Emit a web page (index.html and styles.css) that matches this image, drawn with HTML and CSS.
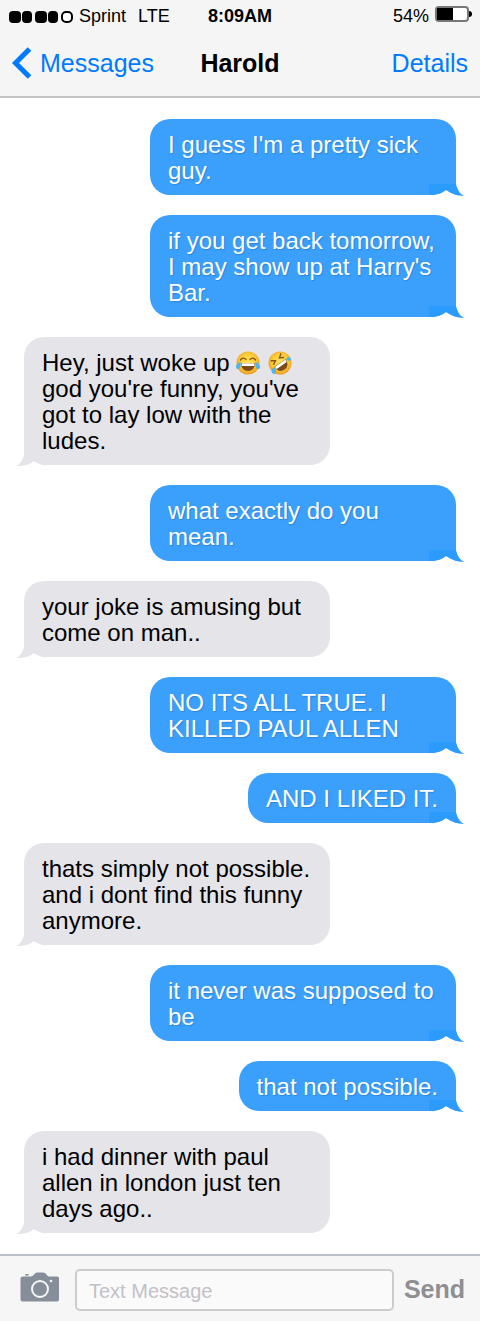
FILE: index.html
```html
<!DOCTYPE html>
<html lang="en">
<head>
<meta charset="utf-8">
<meta name="viewport" content="width=device-width, initial-scale=1">
<title>Harold</title>
<link rel="stylesheet" href="styles.css">
</head>
<body>
<svg class="defs" aria-hidden="true">
  <defs>
    <symbol id="tail-sent" viewBox="0 0 36 12">
      <path class="tail-gap" d="M0 12V11C8 11 13 9 17 6C22 9 28 12 35 12Z"/>
      <path d="M0 0H27C28 5 31 10 35 12C28 12 22 9 17 6C13 9 8 11 0 11Z"/>
    </symbol>
    <symbol id="tail-received" viewBox="0 0 30 12">
      <path class="tail-gap" d="M0 12C8 12 14 10 18 7C21 9 25 11 30 11V12Z"/>
      <path d="M8 0C7 6 4 10 0 12C8 12 14 10 18 7C21 9 25 11 30 11V0Z"/>
    </symbol>
    <radialGradient id="face" cx="50%" cy="45%" r="55%">
      <stop offset="0" stop-color="#ffe45c"/>
      <stop offset="0.65" stop-color="#fdcb35"/>
      <stop offset="1" stop-color="#eb9a22"/>
    </radialGradient>
  </defs>
</svg>

<header class="header">
  <div class="status">
    <div class="carrier">
      <svg class="signal" viewBox="0 0 64 12" aria-hidden="true">
        <rect width="12" height="12" rx="4"/><rect x="13" width="10" height="12" rx="4"/>
        <rect x="26" width="12" height="12" rx="4"/><rect x="39" width="10" height="12" rx="4"/>
        <rect class="signal-empty" x="53" y="1" width="10" height="10" rx="4"/>
      </svg>
      <span>Sprint</span>
      <span class="network">LTE</span>
    </div>
    <time class="time">8:09AM</time>
    <div class="power">
      <span>54%</span>
      <svg class="battery" viewBox="0 0 37 16" aria-hidden="true">
        <rect x="1" y="1" width="32" height="14" rx="3" fill="#fff" stroke="#777" stroke-width="2"/>
        <path d="M2 2H18V14H2Z"/>
        <path d="M34 5C36 5 37 6 37 8S36 11 34 11Z"/>
      </svg>
    </div>
  </div>
  <nav class="nav">
    <a class="link" href="#"><svg class="chevron" viewBox="0 0 20 32" aria-hidden="true"><path d="M17.500 2L3.500 16L17.500 30"/></svg>Messages</a>
    <h1 class="title">Harold</h1>
    <a class="link details" href="#">Details</a>
  </nav>
</header>

<main class="thread">
  <p class="bubble sent">I guess I'm a pretty sick guy.<svg class="tail" aria-hidden="true"><use href="#tail-sent"/></svg></p>
  <p class="bubble sent">if you get back tomorrow, I may show up at Harry's Bar.<svg class="tail" aria-hidden="true"><use href="#tail-sent"/></svg></p>
  <p class="bubble received">Hey, just woke up <svg class="emoji" viewBox="0 0 24 24" role="img" aria-label="Face with tears of joy">
      <circle cx="12" cy="12" r="11.500" fill="url(#face)"/>
      <path d="M4.500 9Q7 5.500 10 8.500M14 8.500Q17 5.500 19.500 9" fill="none" stroke="#8a5518" stroke-width="1.400" stroke-linecap="round"/>
      <path d="M5 12H19Q18.500 20 12 20Q5.500 20 5 12Z" fill="#7d4a1c"/>
      <path d="M5.500 12.300H18.500L18 15H6Z" fill="#fff"/>
      <path d="M4.500 11C1 12 -1 15 0.500 17.500C3 19.500 5.500 16 4.500 11ZM19.500 11C23 12 25 15 23.500 17.500C21 19.500 18.500 16 19.500 11Z" fill="#4ab5ef"/>
    </svg> <svg class="emoji" viewBox="0 0 24 24" role="img" aria-label="Rolling on the floor laughing">
      <circle cx="12" cy="12" r="11.500" fill="url(#face)"/>
      <g transform="rotate(-35 12 12)">
        <path d="M6 5L9.500 7.500L6 9.500M18 5L14.500 7.500L18 9.500" fill="none" stroke="#8a5518" stroke-width="1.400" stroke-linecap="round"/>
        <path d="M5 12H19Q18.500 20 12 20Q5.500 20 5 12Z" fill="#7d4a1c"/>
        <path d="M5.500 12.300H18.500L18 15H6Z" fill="#fff"/>
        <path d="M4.500 12C1 12 -1 15 0.500 17.500C3 19 5.500 16 4.500 12ZM19.500 12C22 11 24 13 23.500 15C22 17 19 15 19.500 12Z" fill="#4ab5ef"/>
      </g>
    </svg> god you're funny, you've got to lay low with the ludes.<svg class="tail" aria-hidden="true"><use href="#tail-received"/></svg></p>
  <p class="bubble sent">what exactly do you mean.<svg class="tail" aria-hidden="true"><use href="#tail-sent"/></svg></p>
  <p class="bubble received">your joke is amusing but come on man..<svg class="tail" aria-hidden="true"><use href="#tail-received"/></svg></p>
  <p class="bubble sent">NO ITS ALL TRUE. I KILLED PAUL ALLEN<svg class="tail" aria-hidden="true"><use href="#tail-sent"/></svg></p>
  <p class="bubble sent">AND I LIKED IT.<svg class="tail" aria-hidden="true"><use href="#tail-sent"/></svg></p>
  <p class="bubble received">thats simply not possible. and i dont find this funny anymore.<svg class="tail" aria-hidden="true"><use href="#tail-received"/></svg></p>
  <p class="bubble sent">it never was supposed to be<svg class="tail" aria-hidden="true"><use href="#tail-sent"/></svg></p>
  <p class="bubble sent">that not possible.<svg class="tail" aria-hidden="true"><use href="#tail-sent"/></svg></p>
  <p class="bubble received">i had dinner with paul allen in london just ten days ago..<svg class="tail" aria-hidden="true"><use href="#tail-received"/></svg></p>
</main>

<form class="composer">
  <button class="camera" type="button" aria-label="Add a photo">
    <svg viewBox="0 0 40 30" aria-hidden="true">
      <path d="M3 4.500H11Q13 4 14 2.500Q15.500 0.500 17 0.500H23Q25 0.500 26.500 2.500Q27.500 4.500 29 4.500H37Q39 4.500 39 6.500V27.500Q39 29.500 37 29.500H2.500Q0.500 29.500 0.500 27.500V6.500Q0.500 4.500 3 4.500Z" fill="#858e99"/>
      <path d="M5 3.500Q5 2 6 2H8Q9 2 9 3.500Z" fill="#858e99"/>
      <circle cx="20" cy="17" r="8" fill="none" stroke="#f6f6f6" stroke-width="2"/>
      <circle cx="31" cy="9" r="1.300" fill="#f6f6f6"/>
    </svg>
  </button>
  <input class="field" type="text" placeholder="Text Message" aria-label="Text Message">
  <button class="send" type="submit">Send</button>
</form>
</body>
</html>
```
FILE: styles.css
```css
* { box-sizing: border-box; }

body {
  margin: 0;
  background: #fff;
  color: #000;
  font-family: "Liberation Sans", Arial, sans-serif;
}

.defs { position: absolute; width: 0; height: 0; }

.header {
  background: #f5f5f5;
  border-bottom: 2px solid #c4c4c4;
  padding-bottom: 7px;
}

.status, .nav {
  display: grid;
  grid-template-columns: 1fr auto 1fr;
  align-items: center;
}

.status {
  height: 32px;
  padding: 0 8px;
  font-size: 18px;
  line-height: 20px;
}
.carrier, .power { display: flex; align-items: center; }
.carrier { padding-left: 1px; }
.power { justify-content: flex-end; gap: 6px; }
.signal { width: 64px; height: 12px; margin-top: 2px; margin-right: 6px; }
.signal-empty { fill: #fff; stroke: #000; stroke-width: 2; }
.network { margin-left: 12px; }
.time { font-weight: bold; }
.battery { width: 37px; height: 16px; margin-bottom: 4px; }

.nav {
  height: 52px;
  margin-top: 5px;
  padding: 0 12px;
}
.link {
  display: flex;
  align-items: center;
  gap: 8px;
  color: #007aff;
  font-size: 25px;
  line-height: 32px;
  text-decoration: none;
}
.details { justify-content: flex-end; }
.chevron { width: 20px; height: 32px; fill: none; stroke: #007aff; stroke-width: 5; }
.title { margin: 0; font-size: 25px; line-height: 32px; }

.thread {
  display: flex;
  flex-direction: column;
  gap: 20px;
  padding: 21px 24px;
}

.bubble {
  position: relative;
  max-width: calc(75% - 18px);
  margin: 0;
  padding: 13px 18px 11px;
  font-size: 24px;
  line-height: 26px;
}
.sent {
  align-self: flex-end;
  background: #3b9ffc;
  color: #fff;
  border-radius: 20px 20px 0 20px;
  text-shadow: 1px 1px 1px #2b86dc;
}
.received {
  align-self: flex-start;
  background: #e5e4e9;
  border-radius: 20px 20px 20px 0;
}

.tail { position: absolute; bottom: -1px; height: 12px; }
.sent .tail { right: -9px; width: 36px; fill: #2b9bfd; }
.received .tail { left: -8px; width: 30px; fill: #e5e4e9; }
.tail .tail-gap, .tail-gap { fill: #fff; }

.emoji { width: 24px; height: 24px; margin-right: 1px; vertical-align: -4px; }

.composer {
  display: flex;
  align-items: center;
  gap: 10px;
  padding: 13px 15px 10px 20px;
  background: #f6f6f6;
  border-top: 2px solid #b8bec5;
}
.camera, .send {
  border: 0;
  padding: 0;
  background: none;
  font-family: inherit;
}
.camera { width: 40px; height: 30px; margin-right: 5px; margin-bottom: 6px; }
.camera svg { display: block; width: 40px; height: 30px; }
.field {
  flex: 1;
  min-width: 0;
  height: 42px;
  padding: 2px 12px 0;
  border: 2px solid #ccc;
  border-radius: 5px;
  background: #fafafa;
  font-family: inherit;
  font-size: 20px;
}
.field::placeholder { color: #c2c1c7; opacity: 1; }
.send { color: #8e8e93; font-size: 25px; font-weight: bold; line-height: 30px; margin-bottom: 2px; }
```
